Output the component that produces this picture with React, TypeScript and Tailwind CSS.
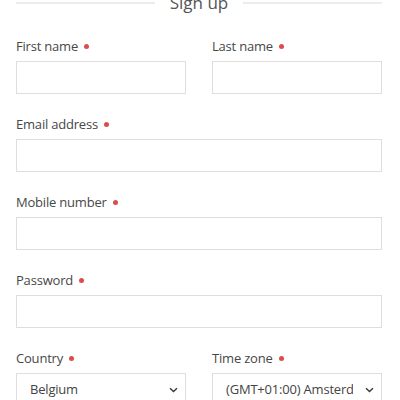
import type { ReactNode } from 'react';

const font = { fontFamily: '"Segoe UI", "Open Sans", "Noto Sans", sans-serif' };

function Label({ children }: { children: ReactNode }) {
  return (
    <div className="flex h-[20px] items-center text-[13px] leading-[20px] tracking-[-0.2px] text-[#474747]">
      <span>{children}</span>
      <span className="ml-[6px] inline-block h-[5px] w-[5px] rounded-full bg-[#dc4c4c]" />
    </div>
  );
}

function TextField({ label, type = 'text' }: { label: string; type?: string }) {
  return (
    <label className="flex flex-col">
      <Label>{label}</Label>
      <input
        type={type}
        className="mt-[5px] h-[33px] w-full border border-[#dedede] bg-white px-3 text-[13px] text-[#444] outline-none"
      />
    </label>
  );
}

function Chevron() {
  return (
    <svg width="9" height="6" viewBox="0 0 9 6" className="shrink-0" aria-hidden="true">
      <path d="M1 1.2 4.5 4.6 8 1.2" fill="none" stroke="#3a3a3a" strokeWidth="1.4" />
    </svg>
  );
}

function SelectField({ label, value }: { label: string; value: string }) {
  return (
    <div className="flex flex-col">
      <Label>{label}</Label>
      <div className="mt-[5px] flex h-[33px] items-center border border-[#dedede] bg-white pl-[13px] pr-[7px]">
        <span className="flex-1 overflow-hidden whitespace-nowrap text-[13px] tracking-[-0.2px] text-[#444]">{value}</span>
        <span className="ml-3">
          <Chevron />
        </span>
      </div>
    </div>
  );
}

export default function App() {
  return (
    <div className="h-[400px] w-[400px] overflow-hidden bg-white pl-[16px] pr-[18px]" style={font}>
      <div className="-mt-[9px] flex items-center gap-[15px]">
        <div className="h-[2px] flex-1 bg-[#ececec]" />
        <span className="text-[17px] leading-[24px] text-[#555]">Sign up</span>
        <div className="h-[2px] flex-1 bg-[#ececec]" />
      </div>

      <form className="mt-[21px] flex flex-col gap-y-[20px]">
        <div className="grid grid-cols-2 gap-x-[26px]">
          <TextField label="First name" />
          <TextField label="Last name" />
        </div>
        <TextField label="Email address" type="email" />
        <TextField label="Mobile number" type="tel" />
        <TextField label="Password" type="password" />
        <div className="grid grid-cols-2 gap-x-[26px]">
          <SelectField label="Country" value="Belgium" />
          <SelectField label="Time zone" value="(GMT+01:00) Amsterdam" />
        </div>
      </form>
    </div>
  );
}
